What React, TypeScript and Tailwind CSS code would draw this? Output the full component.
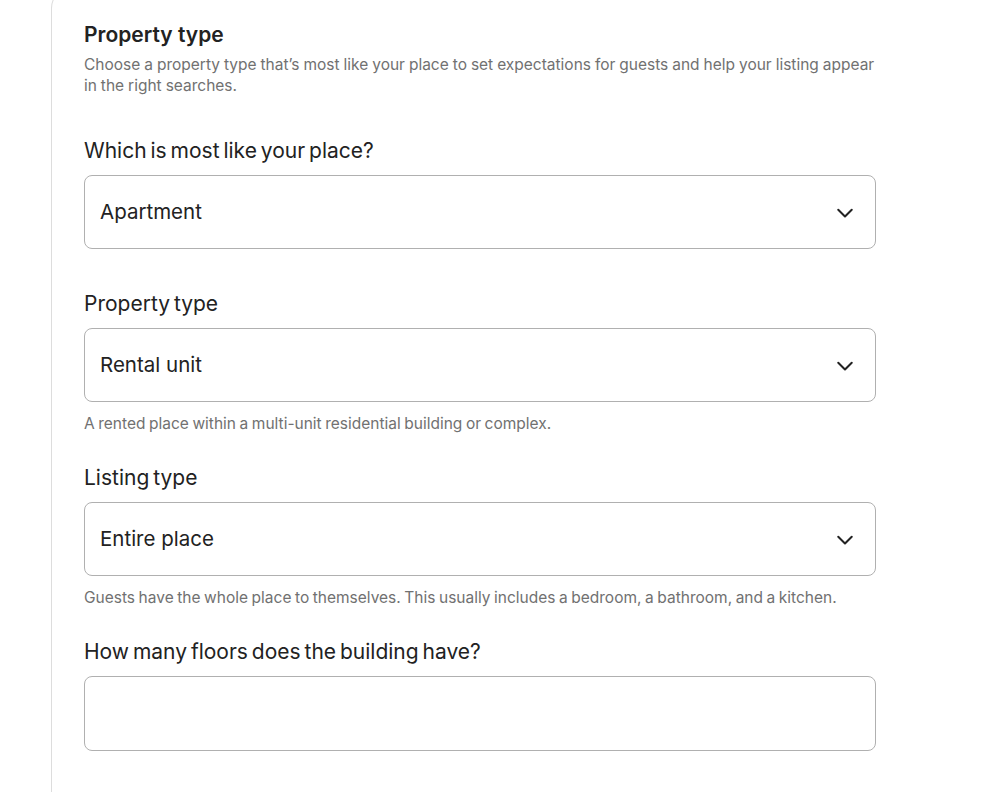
import React from "react";

const Chevron = () => (
  <svg width="18" height="18" viewBox="0 0 32 32" fill="none" stroke="#222222" strokeWidth="3.6" strokeLinecap="round" strokeLinejoin="round" aria-hidden="true">
    <path d="M28 12 16 24 4 12" />
  </svg>
);

function Label({ children }: { children: React.ReactNode }) {
  return <div className="text-[21px] leading-[26px] text-[#222222] [word-spacing:-2px]">{children}</div>;
}

function SelectField({ label, value, help }: { label: string; value: string; help?: string }) {
  return (
    <div className="flex flex-col">
      <Label>{label}</Label>
      <div className="mt-[11px] h-[74px] w-[792px] rounded-[8px] border border-[#b0b0b0] flex items-center justify-between pl-[15px] pr-[21px]">
        <span className="text-[20.5px] text-[#222222]">{value}</span>
        <Chevron />
      </div>
      {help && <div className="mt-[12px] mb-[-11px] text-[15.5px] leading-[20px] text-[#717171] [word-spacing:-0.8px]">{help}</div>}
    </div>
  );
}

export default function App() {
  return (
    <div className="min-h-[792px] bg-white overflow-hidden" style={{ fontFamily: "Inter, 'Noto Sans', sans-serif" }}>
      <div className="ml-[51px] -mt-[12px] min-h-[820px] border-l border-t border-[#dddddd] rounded-tl-[20px] pl-[32px] pt-[33px]">
        <h2 className="text-[21px] leading-[26px] font-semibold text-[#222222]">Property type</h2>
        <p className="mt-[6px] w-[800px] text-[15.5px] leading-[21px] text-[#717171] [word-spacing:-0.4px]">
          Choose a property type that’s most like your place to set expectations for guests and help your listing appear in the right searches.
        </p>
        <div className="mt-[42px] flex flex-col gap-[42px]">
          <SelectField label="Which is most like your place?" value="Apartment" />
          <SelectField label="Property type" value="Rental unit" help="A rented place within a multi-unit residential building or complex." />
          <SelectField label="Listing type" value="Entire place" help="Guests have the whole place to themselves. This usually includes a bedroom, a bathroom, and a kitchen." />
          <div className="flex flex-col">
            <Label>How many floors does the building have?</Label>
            <div className="mt-[11px] h-[75px] w-[792px] rounded-[8px] border border-[#b0b0b0]" />
          </div>
        </div>
      </div>
    </div>
  );
}
